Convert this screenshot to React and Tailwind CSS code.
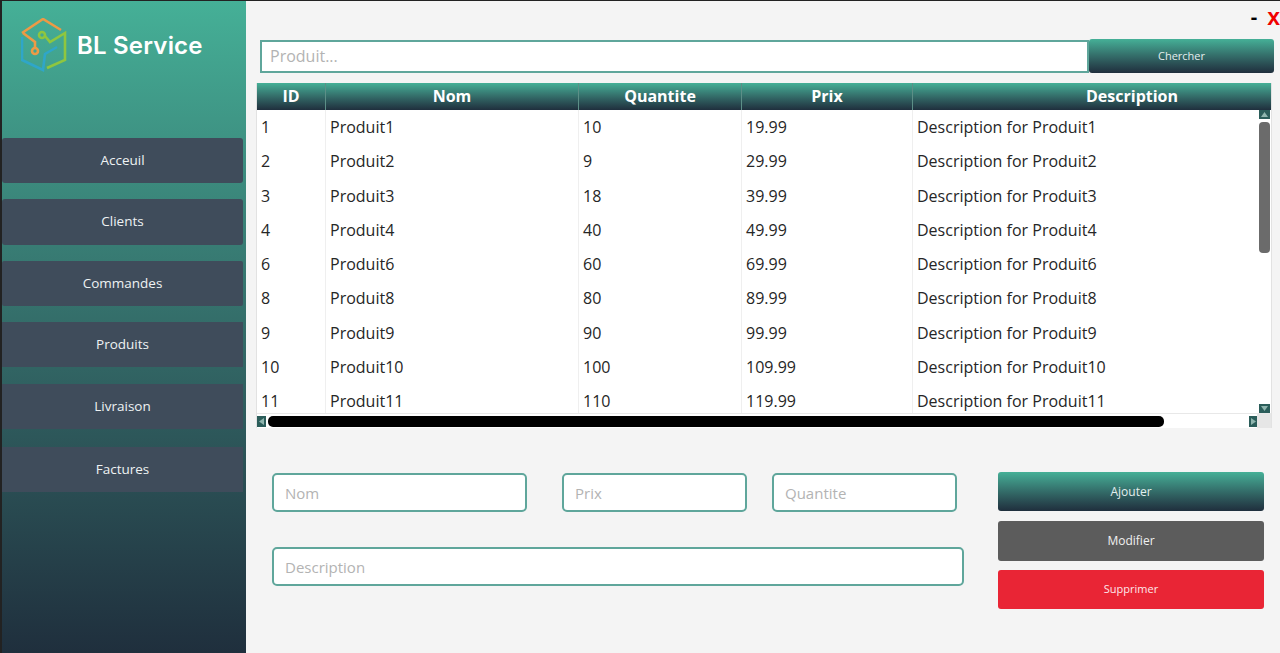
const font = { fontFamily: '"Open Sans", "Noto Sans", sans-serif' };

const menu = [
  { label: 'Acceuil', cls: 'h-[45px] rounded-[3px] mb-[16px]' },
  { label: 'Clients', cls: 'h-[46px] rounded-[3px] mb-[16px] pb-[2px]' },
  { label: 'Commandes', cls: 'h-[45px] rounded-[2px] mb-[16px]' },
  { label: 'Produits', cls: 'h-[45px] mb-[17px]' },
  { label: 'Livraison', cls: 'h-[45px] mb-[18px]' },
  { label: 'Factures', cls: 'h-[45px]' },
];

const rows = [
  ['1', 'Produit1', '10', '19.99', 'Description for Produit1'],
  ['2', 'Produit2', '9', '29.99', 'Description for Produit2'],
  ['3', 'Produit3', '18', '39.99', 'Description for Produit3'],
  ['4', 'Produit4', '40', '49.99', 'Description for Produit4'],
  ['6', 'Produit6', '60', '69.99', 'Description for Produit6'],
  ['8', 'Produit8', '80', '89.99', 'Description for Produit8'],
  ['9', 'Produit9', '90', '99.99', 'Description for Produit9'],
  ['10', 'Produit10', '100', '109.99', 'Description for Produit10'],
  ['11', 'Produit11', '110', '119.99', 'Description for Produit11'],
];

const gridCols = 'grid grid-cols-[69px_253px_163px_171px_439px]';
const headerGradient = 'bg-gradient-to-b from-[#45b097] to-[#1f2f3d]';

function Logo() {
  return (
    <svg width="50" height="56" viewBox="0 0 50 56" fill="none" strokeWidth="2.6" className="shrink-0">
      <path d="M1 15 L22 1 L40 12" stroke="#ee9a45" />
      <path d="M2 15 L14 24 V30" stroke="#ee9a45" />
      <circle cx="14" cy="33" r="3" stroke="#ee9a45" />
      <path d="M1 19 V42 L22 52 L24 36 L36 29" stroke="#2fa6c9" />
      <circle cx="21" cy="17" r="3" stroke="#8fc63f" />
      <path d="M24 18 L29 24 L44 15 V42 L26 50" stroke="#8fc63f" />
    </svg>
  );
}

function Sidebar() {
  return (
    <div className="w-[246px] shrink-0 border-l-2 border-[#222] bg-gradient-to-b from-[#45b097] to-[#1f2f3d] flex flex-col">
      <div className="h-[137px] pt-[17px] pl-[19px] flex items-start gap-[6px]">
        <Logo />
        <span className="mt-[11px] text-[24px] leading-[34px] font-semibold text-white tracking-[0.2px]" style={{ fontFamily: 'Inter, sans-serif' }}>
          BL Service
        </span>
      </div>
      {menu.map((m) => (
        <div
          key={m.label}
          className={`${m.cls} w-[241px] bg-[#3f4c5b] text-[#eef2f3] text-[13.5px] flex items-center justify-center`}
        >
          {m.label}
        </div>
      ))}
    </div>
  );
}

function Table() {
  return (
    <div className="ml-[10px] mt-[10px] w-[1016px] h-[345px] bg-white border-x border-[#e2e2e2] flex flex-col overflow-hidden">
      <div className={`${gridCols} ${headerGradient} h-[27px] shrink-0 text-white font-bold text-[16px] leading-[27px] text-center`}>
        {['ID', 'Nom', 'Quantite', 'Prix', 'Description'].map((h) => (
          <div key={h} className="border-r border-[#5c8f87]">{h}</div>
        ))}
      </div>
      <div className="flex h-[303px]">
        <div className="w-[1001px] overflow-hidden">
          {rows.map((r) => (
            <div key={r[0]} className={`${gridCols} h-[34.3px] text-[16px] leading-[34.3px] text-[#262626]`}>
              {r.map((c, i) => (
                <div key={i} className="border-r border-[#efefef] pl-[4px] whitespace-nowrap">{c}</div>
              ))}
            </div>
          ))}
        </div>
        <div className="w-[13px] bg-white flex flex-col items-center">
          <div className="w-[11px] h-[9px] bg-[#2b5d5a] text-[#8fb5ae] flex items-center justify-center">
            <svg width="7" height="5" viewBox="0 0 7 5"><path d="M0 5 L3.5 0 L7 5 Z" fill="currentColor" /></svg>
          </div>
          <div className="mt-[3px] w-[11px] h-[131px] bg-[#6b6b6b] rounded-[4px]" />
          <div className="mt-auto w-[11px] h-[9px] bg-[#2b5d5a] text-[#8fb5ae] flex items-center justify-center">
            <svg width="7" height="5" viewBox="0 0 7 5"><path d="M0 0 L3.5 5 L7 0 Z" fill="currentColor" /></svg>
          </div>
        </div>
      </div>
      <div className="flex items-center h-[15px] border-t border-[#e8e8e8]">
        <div className="w-[9px] h-[11px] bg-[#2b5d5a] text-[#8fb5ae] flex items-center justify-center">
          <svg width="5" height="7" viewBox="0 0 5 7"><path d="M5 0 L0 3.5 L5 7 Z" fill="currentColor" /></svg>
        </div>
        <div className="ml-[2px] w-[896px] h-[11px] bg-black rounded-[5px]" />
        <div className="ml-auto w-[8px] h-[11px] bg-[#2b5d5a] text-[#8fb5ae] flex items-center justify-center">
          <svg width="5" height="7" viewBox="0 0 5 7"><path d="M0 0 L5 3.5 L0 7 Z" fill="currentColor" /></svg>
        </div>
        <div className="w-[14px] h-full bg-[#e6e6e6]" />
      </div>
    </div>
  );
}

function Field({ placeholder, className }) {
  return (
    <input
      readOnly
      placeholder={placeholder}
      className={`${className} h-[39px] bg-white border-2 border-[#5fa69b] rounded-[5px] px-[11px] text-[15px] text-[#333] placeholder:text-[#b3b3b3] outline-none`}
    />
  );
}

function Action({ label, className }) {
  return (
    <div className={`${className} w-[266px] rounded-[3px] flex items-center justify-center`}>
      {label}
    </div>
  );
}

export default function App() {
  return (
    <div className="w-[1280px] h-[653px] overflow-hidden flex bg-[#f4f4f4] border-t border-[#222]" style={font}>
      <Sidebar />
      <div className="flex-1 flex flex-col">
        <div className="h-[38px] flex justify-end items-start pt-[3px] gap-[10px] font-bold leading-[26px]">
          <span className="text-[20px] text-black">-</span>
          <span className="text-[23px] text-[#f00000]" style={{ fontFamily: '"Liberation Sans", sans-serif' }}>x</span>
        </div>
        <div className="flex items-center pl-[14px]">
          <input
            readOnly
            placeholder="Produit..."
            className="w-[829px] h-[33px] bg-white border-2 border-[#5fa69b] px-[8px] text-[16px] placeholder:text-[#b3b3b3] outline-none"
          />
          <div className={`${headerGradient} w-[185px] h-[34px] rounded-[3px] text-[#e3eeee] text-[11px] flex items-center justify-center`}>
            Chercher
          </div>
        </div>
        <Table />
        <div className="flex pl-[26px] pt-[45px]">
          <div className="w-[726px] flex flex-col gap-[35px]">
            <div className="flex gap-[35px]">
              <Field placeholder="Nom" className="w-[255px]" />
              <Field placeholder="Prix" className="w-[185px]" />
              <Field placeholder="Quantite" className="w-[185px] -ml-[10px]" />
            </div>
            <Field placeholder="Description" className="w-[692px]" />
          </div>
          <div className="flex flex-col -mt-[1px]">
            <Action label="Ajouter" className={`${headerGradient} h-[39px] text-[#e3eeee] text-[12px]`} />
            <Action label="Modifier" className="mt-[10px] h-[40px] bg-[#5c5c5c] text-[#f0f0f0] text-[12px]" />
            <Action label="Supprimer" className="mt-[9px] h-[39px] bg-[#e92535] text-[#fde8ea] text-[11px]" />
          </div>
        </div>
      </div>
    </div>
  );
}
